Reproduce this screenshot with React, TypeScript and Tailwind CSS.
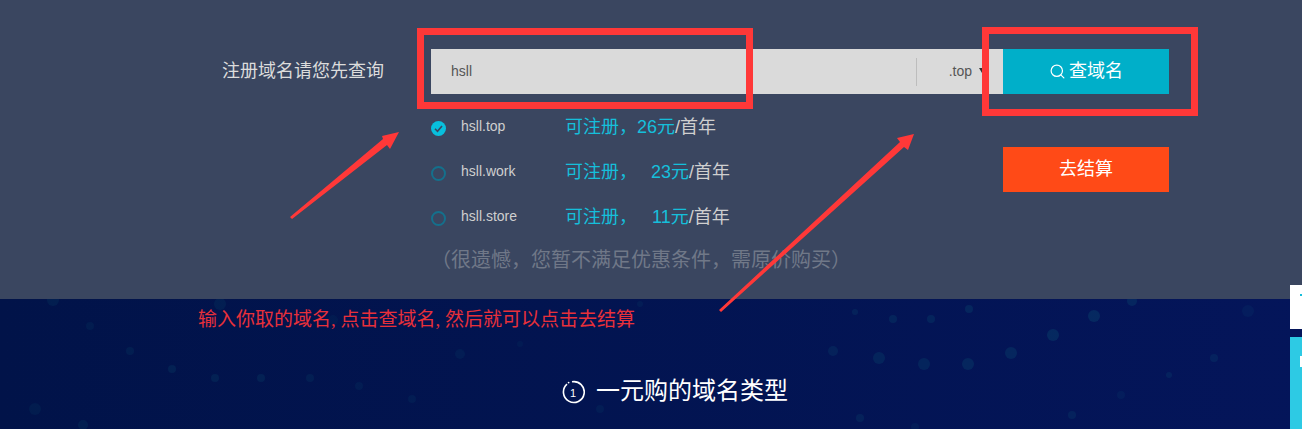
import { Search } from "lucide-react";

const DOMAINS = [
  { name: "hsll.top", price: "26", gap: "", checked: true },
  { name: "hsll.work", price: "23", gap: "ml-[14px]", checked: false },
  { name: "hsll.store", price: "11", gap: "ml-[15px]", checked: false },
];

// background specks in the dark band, [x, y, r, opacity]; y is from the band's top
const DOTS: [number, number, number, number][] = [
  [53, 1, 6, 0.25], [90, 27, 4, 0.2], [130, 52, 4, 0.25], [172, 70, 4, 0.3], [215, 79, 4, 0.3],
  [261, 79, 4, 0.3], [310, 79, 4, 0.25], [359, 87, 4, 0.2], [412, 100, 4, 0.2], [35, 110, 6, 0.2],
  [83, 126, 5, 0.25], [220, 5, 6, 0.25], [333, 21, 5, 0.15], [855, 13, 3, 0.3], [893, 20, 4, 0.35],
  [931, 20, 4, 0.35], [969, 10, 4, 0.4], [1094, 17, 6, 0.45], [1053, 36, 6, 0.45], [1011, 54, 6, 0.4],
  [968, 65, 6, 0.4], [924, 65, 6, 0.35], [879, 59, 6, 0.35], [833, 52, 5, 0.3], [1132, 2, 5, 0.4],
  [1214, 59, 4, 0.3], [1169, 76, 3, 0.3], [1121, 96, 4, 0.2], [1072, 116, 4, 0.3], [860, 119, 4, 0.3],
  [915, 128, 4, 0.2], [640, 5, 3, 0.2], [520, 45, 3, 0.15], [460, 55, 5, 0.2], [600, 110, 4, 0.2],
  [1248, 12, 6, 0.2],
];

export default function App() {
  return (
    <div className="relative h-[429px] w-[1302px] overflow-hidden bg-[#031350] font-['Liberation_Sans','Noto_Sans_CJK_SC',sans-serif]">
      {/* Search panel */}
      <section className="h-[299px] bg-[#3a4660] pt-[49px] pl-[222px]">
        <div className="grid grid-cols-[209px_572px_166px]">
          <div className="flex h-[45px] items-center text-[18px] text-[#dcdcdc]">注册域名请您先查询</div>
          <div className="flex h-[45px] items-center bg-[#dadada] pl-[20px]">
            <span className="text-[14px] text-[#555555]">hsll</span>
            <div className="ml-auto flex items-center">
              <div className="h-[28px] w-px bg-[#bdbdbd]" />
              <span className="ml-[32px] text-[14px] text-[#555555]">.top</span>
              <span className="mb-[2px] ml-[7px] mr-[18px] h-0 w-0 border-x-[3px] border-t-[5px] border-x-transparent border-t-[#333333]" />
            </div>
          </div>
          <button className="flex h-[45px] items-center justify-center bg-[#00afc9] text-[18px] text-white">
            <Search className="mr-[3px] h-[17px] w-[17px]" strokeWidth={1.7} />
            查域名
          </button>

          <div />
          <div>
            <div className="mt-[10px]">
              {DOMAINS.map((d) => (
                <div key={d.name} className="flex h-[45px] items-center">
                  {d.checked ? (
                    <span className="mt-[3px] flex h-[15px] w-[15px] items-center justify-center rounded-full bg-[#08bfdd]">
                      <svg viewBox="0 0 15 15" className="h-[15px] w-[15px]" fill="none">
                        <path d="M4 7.8l2.5 2.5L11 5" stroke="#3a4660" strokeWidth="1.6" />
                      </svg>
                    </span>
                  ) : (
                    <span className="mt-[3px] h-[15px] w-[15px] rounded-full border-2 border-[#14708c]" />
                  )}
                  <span className="ml-[15px] w-[104px] text-[14px] text-[#cfcfcf]">{d.name}</span>
                  <span className="pt-[1px] text-[18px] text-[#cfcfcf]">
                    <span className="text-[#15bfdb]">
                      可注册，<span className={d.gap}>{d.price}元</span>
                    </span>
                    /首年
                  </span>
                </div>
              ))}
            </div>
            <p className="mt-[6px] whitespace-nowrap text-[20px] text-[#707888]">（很遗憾，您暂不满足优惠条件，需原价购买）</p>
          </div>
          <button className="mt-[53px] flex h-[45px] items-center justify-center bg-[#ff4a17] text-[18px] text-white">去结算</button>
        </div>
      </section>

      {/* Dark band */}
      <section className="relative h-[130px] bg-gradient-to-r from-[#011349] to-[#04155a]">
        <svg className="absolute inset-0 h-[130px] w-[1302px] opacity-50" viewBox="0 0 1302 130">
          {DOTS.map(([x, y, r, o], i) => (
            <circle key={i} cx={x} cy={y} r={r} fill="#0f6f80" opacity={o} />
          ))}
        </svg>
        <p className="absolute left-[198px] top-[7px] whitespace-nowrap font-['Liberation_Serif','Noto_Sans_CJK_SC',serif] text-[19px] text-[#e8303a]">
          输入你取的域名, 点击查域名, 然后就可以点击去结算
        </p>
        <div className="relative flex h-[184px] items-center justify-center pl-[47px] text-[24px] text-white">
          <svg viewBox="0 0 24 24" className="mr-[11px] mt-[2px] h-[24px] w-[24px]" fill="none">
            <path d="M6 4.2a10.4 10.4 0 1 0 5-2.4" stroke="white" strokeWidth="1.6" />
            <circle cx="7.6" cy="2.6" r="0.9" fill="white" />
            <text x="12" y="16.5" textAnchor="middle" fontSize="11" fontFamily="Liberation Sans, sans-serif" fill="white">1</text>
          </svg>
          一元购的域名类型
        </div>
      </section>

      {/* Page edge widgets */}
      <div className="absolute left-[1290px] top-[285px] h-[44px] w-[12px] bg-white">
        <div className="ml-[10px] mt-[9px] h-[2px] w-[2px] bg-[#15bfdb]" />
      </div>
      <div className="absolute left-[1290px] top-[337px] h-[92px] w-[12px] bg-[#2dcae4]">
        <div className="ml-[10px] mt-[19px] h-[11px] w-[2px] bg-white" />
      </div>

      {/* Hand-drawn annotations */}
      <div className="absolute left-[417px] top-[28px] h-[81px] w-[336px] border-[7px] border-[#ff3838]" />
      <div className="absolute left-[982px] top-[27px] h-[89px] w-[216px] border-[7px] border-[#ff3838]" />
      <svg className="absolute left-0 top-0 h-[429px] w-[1302px]" viewBox="0 0 1302 429">
        <polygon points="290,217 383,139 382,136 399,132 390,149 387,145 292,219" fill="#ff3838" />
        <polygon points="719,310 900,142 897,138 914,134 908,150 904,147 721,312" fill="#ff3838" />
      </svg>
    </div>
  );
}
